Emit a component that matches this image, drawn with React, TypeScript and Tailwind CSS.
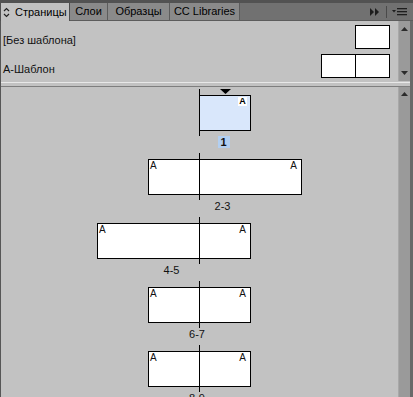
import React from "react";

type Spread = { label: string; L: number; R: number; first?: boolean };

const spreads: Spread[] = [
  { label: "1", L: 0, R: 51, first: true },
  { label: "2-3", L: 51, R: 102 },
  { label: "4-5", L: 102, R: 51 },
  { label: "6-7", L: 51, R: 51 },
  { label: "8-9", L: 51, R: 51 },
];

function UpArrow() {
  return (
    <svg width="7" height="4" viewBox="0 0 7 4" className="block">
      <polygon points="3.5,0 7,4 0,4" fill="#2b2b2b" />
    </svg>
  );
}
function DownArrow() {
  return (
    <svg width="7" height="4" viewBox="0 0 7 4" className="block">
      <polygon points="0,0 7,0 3.5,4" fill="#2b2b2b" />
    </svg>
  );
}

function SpreadView({ s }: { s: Spread }) {
  return (
    <div
      className="flex flex-col items-center w-fit h-[64px] shrink-0"
      style={{ marginLeft: 198 - s.L }}
    >
      <div className="flex items-start h-[47px]">
        {s.L > 0 && (
          <div
            className="mt-[6px] h-[36px] bg-white border border-r-0 border-black pl-[1px] text-[10px] leading-[11px] text-[#111]"
            style={{ width: s.L }}
          >
            A
          </div>
        )}
        <div className="w-px h-[47px] bg-black" />
        {s.first ? (
          <div className="flex flex-col" style={{ width: s.R }}>
            <div className="h-[6px] flex justify-center">
              <svg width="11" height="5" viewBox="0 0 11 5" className="block">
                <polygon points="0,0 11,0 5.5,5" fill="#000" />
              </svg>
            </div>
            <div className="h-[36px] bg-[#d9e7fb] border border-l-0 border-black flex justify-end items-start pr-[3px] pt-px">
              <div className="w-[9px] h-[9px] bg-white flex items-center justify-center text-[9px] leading-[9px] font-bold text-black">
                A
              </div>
            </div>
          </div>
        ) : (
          <div
            className="mt-[6px] h-[36px] bg-white border border-l-0 border-black pr-[4px] text-right text-[10px] leading-[11px] text-[#111]"
            style={{ width: s.R }}
          >
            A
          </div>
        )}
      </div>
      {s.first ? (
        <div className="mr-[3px] w-[12px] h-[12px] bg-[#b2cff1] flex items-center justify-center text-[11px] leading-[12px] font-bold text-[#111]">
          1
        </div>
      ) : (
        <div className="pr-[5px] text-[11px] leading-[13px] text-[#111]">{s.label}</div>
      )}
    </div>
  );
}

export default function App() {
  return (
    <div className="w-[413px] h-[397px] overflow-hidden flex flex-col bg-[#c2c2c2] font-['Liberation_Sans',Arial,sans-serif] text-[#111]">
      {/* Tab bar */}
      <div className="h-[21px] shrink-0 bg-[#717171] border-t-[3px] border-[#525252] flex items-stretch">
        <div className="w-[70px] bg-[#c2c2c2] border-l border-r border-[#4f4f4f] flex items-center pl-[2px] gap-[5px] text-[11px] text-black">
          <svg width="7" height="11" viewBox="0 0 7 11" className="block">
            <polyline points="1,4 3.5,1.5 6,4" fill="none" stroke="#222" strokeWidth="1.2" />
            <polyline points="1,7 3.5,9.5 6,7" fill="none" stroke="#222" strokeWidth="1.2" />
          </svg>
          <span>Страницы</span>
        </div>
        <div className="w-[38px] bg-[#8a8a8a] border-r border-b border-[#5c5c5c] flex items-center justify-center text-[11px] text-black">
          Слои
        </div>
        <div className="w-[62px] bg-[#8a8a8a] border-r border-b border-[#5c5c5c] flex items-center justify-center text-[11px] text-black">
          Образцы
        </div>
        <div className="w-[70px] bg-[#8a8a8a] border-r border-b border-[#5c5c5c] flex items-center justify-center text-[11px] text-black">
          CC Libraries
        </div>
        <div className="flex-1 border-b border-[#5c5c5c] flex items-center justify-end pr-[6px]">
          <svg width="10" height="8" viewBox="0 0 10 8" className="block mr-[6px]">
            <polygon points="0,0 4,4 0,8" fill="#1e1e1e" />
            <polygon points="5,0 9,4 5,8" fill="#1e1e1e" />
          </svg>
          <div className="w-px h-[12px] bg-[#4a4a4a] mr-[5px]" />
          <svg width="15" height="8" viewBox="0 0 15 8" className="block">
            <polygon points="0,2 4,2 2,4.5" fill="#1e1e1e" />
            <rect x="5" y="0" width="10" height="1.3" fill="#1e1e1e" />
            <rect x="5" y="3" width="10" height="1.3" fill="#1e1e1e" />
            <rect x="5" y="6" width="10" height="1.3" fill="#1e1e1e" />
          </svg>
        </div>
      </div>

      {/* Body */}
      <div className="flex-1 flex flex-col border-l border-[#565656] border-r-[3px] border-r-[#6a6a6a] min-h-0">
        {/* Masters section */}
        <div className="h-[60px] shrink-0 flex">
          <div className="flex-1 flex flex-col pt-[4px] gap-[5px] pl-[2px] pr-[8px]">
            <div className="h-[24px] flex items-end justify-between">
              <span className="text-[11px] leading-[13px] mb-[2px]">[Без шаблона]</span>
              <div className="w-[35px] h-[24px] bg-white border border-black" />
            </div>
            <div className="h-[24px] flex items-end justify-between">
              <span className="text-[11px] leading-[13px] mb-[2px]">А-Шаблон</span>
              <div className="flex h-[24px]">
                <div className="w-[35px] h-[24px] bg-white border border-black" />
                <div className="w-[34px] h-[24px] bg-white border border-l-0 border-black" />
              </div>
            </div>
          </div>
          <div className="w-[12px] bg-[#9a9a9a] border-l border-[#a8a8a8] flex flex-col items-center justify-between pt-[6px] pb-[6px]">
            <UpArrow />
            <DownArrow />
          </div>
        </div>

        {/* Divider */}
        <div className="h-[6px] shrink-0 flex flex-col">
          <div className="h-px" />
          <div className="h-px bg-[#e8e8e8]" />
          <div className="h-[3px]" />
          <div className="h-px bg-[#7e7e7e]" />
        </div>

        {/* Pages section */}
        <div className="flex-1 flex min-h-0">
          <div className="flex-1 overflow-hidden flex flex-col pt-[2px]">
            {spreads.map((s) => (
              <SpreadView key={s.label} s={s} />
            ))}
          </div>
          <div className="w-[12px] bg-[#9a9a9a] border-l border-[#a8a8a8] flex flex-col items-center pt-[5px]">
            <UpArrow />
          </div>
        </div>
      </div>
    </div>
  );
}
